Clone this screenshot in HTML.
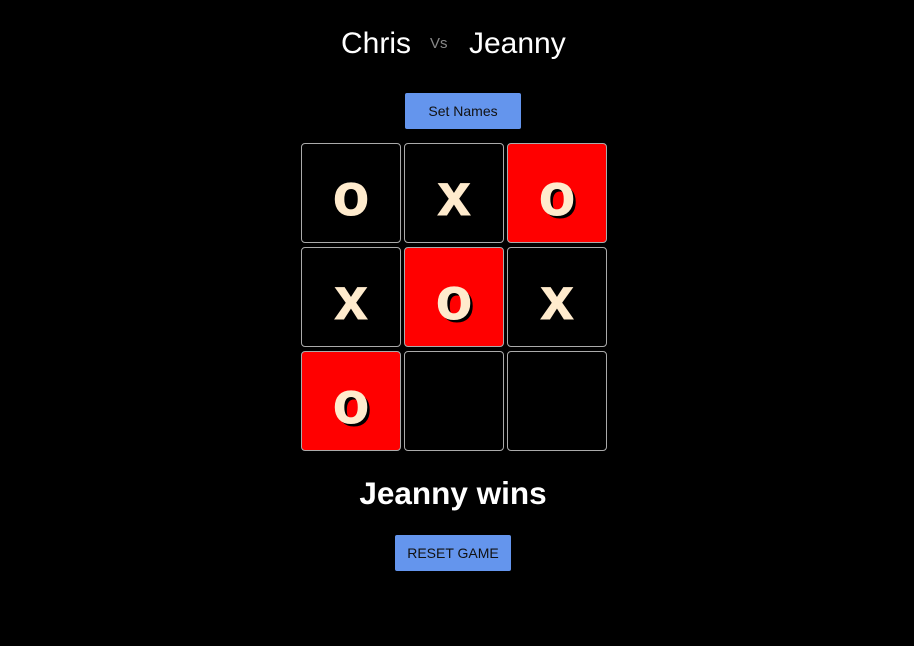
<!DOCTYPE html>
<html><head><style>
body{margin:0;background:#000;width:914px;height:646px;font-family:"Liberation Sans",Arial,sans-serif;position:relative;overflow:hidden}
.n{position:absolute;top:27px;color:#fff;font-size:30px;line-height:34px}
.vs{position:absolute;top:35px;left:430px;color:#888;font-size:15px}
.btn{position:absolute;background:#6495ed;border-radius:2px;color:#111;font-size:14px;text-align:center;line-height:36px;height:36px}
.c{position:absolute;width:98px;height:98px;border:1px solid #aaa;border-radius:4px;box-sizing:content-box;color:#ffebcd;font-weight:bold;font-size:59px;text-align:center;line-height:102px;text-shadow:3px 3px 0 #000;-webkit-text-stroke:1px #ffebcd}
.r{background:#f00}
.w{position:absolute;top:475px;left:-4px;width:914px;text-align:center;color:#fff;font-weight:bold;font-size:31.5px}
</style></head><body>
<div class="n" style="left:341px">Chris</div>
<div class="vs">Vs</div>
<div class="n" style="left:469px">Jeanny</div>
<div class="btn" style="left:405px;top:93px;width:116px">Set Names</div>
<div class="c" style="left:301px;top:143px">o</div>
<div class="c" style="left:404px;top:143px">x</div>
<div class="c r" style="left:507px;top:143px">o</div>
<div class="c" style="left:301px;top:247px">x</div>
<div class="c r" style="left:404px;top:247px">o</div>
<div class="c" style="left:507px;top:247px">x</div>
<div class="c r" style="left:301px;top:351px">o</div>
<div class="c" style="left:404px;top:351px"></div>
<div class="c" style="left:507px;top:351px"></div>
<div class="w">Jeanny wins</div>
<div class="btn" style="left:395px;top:535px;width:116px">RESET GAME</div>
</body></html>
